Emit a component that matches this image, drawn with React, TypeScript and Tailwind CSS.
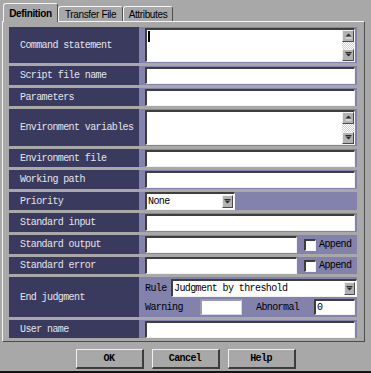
import React from "react";

const mono = "font-['Liberation_Mono',monospace] text-[10px] tracking-[-0.6px]";
const sunken =
  "bg-white border-t-2 border-l-2 border-t-[#3e3e3e] border-l-[#3e3e3e] border-b border-r border-b-[#f2f2f2] border-r-[#f2f2f2]";
const raised =
  "bg-[#b2b2b2] border-t border-l border-t-[#f0f0f0] border-l-[#f0f0f0] border-b border-r border-b-[#4a4a4a] border-r-[#4a4a4a]";

function Arrow({ up }: { up?: boolean }) {
  return (
    <svg width="7" height="6" viewBox="0 0 7 6">
      {up ? (
        <>
          <polygon points="0.5,3.5 3.5,0.5 6.5,3.5" fill="#2c2c2c" />
          <rect x="0.5" y="4.5" width="6" height="1" fill="#f4f4f4" />
        </>
      ) : (
        <>
          <polygon points="0.5,1.5 6.5,1.5 3.5,4.5" fill="#2c2c2c" />
          <rect x="0.5" y="0" width="6" height="1" fill="#2c2c2c" />
        </>
      )}
    </svg>
  );
}

function TextArea({ h, caret }: { h: string; caret?: boolean }) {
  return (
    <div className={`${sunken} ${h} w-[210px] flex`}>
      <div className="flex-1 pl-[1px] pt-[1px]">
        {caret && <div className="w-[2px] h-[11px] bg-black" />}
      </div>
      <div className="w-[12px] flex flex-col">
        <div className={`${raised} h-[12px] flex items-center justify-center`}>
          <Arrow up />
        </div>
        <div className="flex-1 bg-[repeating-conic-gradient(#cfcfcf_0_25%,#ffffff_0_50%)] bg-[length:2px_2px]" />
        <div className={`${raised} h-[12px] flex items-center justify-center`}>
          <Arrow />
        </div>
      </div>
    </div>
  );
}

function Select({ w, h, text }: { w: string; h: string; text: string }) {
  return (
    <div className={`${sunken} ${w} ${h} flex items-center`}>
      <span className={`${mono} flex-1 pl-[1px] text-black`}>{text}</span>
      <div className={`${raised} w-[11px] h-[13px] mr-[1px] flex items-center justify-center`}>
        <Arrow />
      </div>
    </div>
  );
}

function Row({ label, h, children }: { label: string; h: string; children: React.ReactNode }) {
  return (
    <div className={`flex ${h}`}>
      <div className={`w-[130px] bg-[#3a3a5e] flex items-center pl-[11px] text-[#e4e4ec] ${mono}`}>
        {label}
      </div>
      <div className="w-[218px] bg-[#8282ac] pl-[6px] flex items-center">{children}</div>
    </div>
  );
}

function Field({ w = "w-[210px]", h = "h-[17px]", value }: { w?: string; h?: string; value?: string }) {
  return (
    <div className={`${sunken} ${w} ${h} flex items-center`}>
      {value && <span className={`${mono} pl-[1px] text-black`}>{value}</span>}
    </div>
  );
}

function WithAppend() {
  return (
    <div className="flex items-center">
      <Field w="w-[152px]" />
      <div className={`${sunken} ml-[7px] w-[12px] h-[12px]`} />
      <span className={`${mono} ml-[3px] text-black`}>Append</span>
    </div>
  );
}

export default function App() {
  return (
    <div className="w-[371px] h-[373px] bg-[#a8a8a8] border-b-2 border-b-[#141414] flex flex-col overflow-hidden">
      {/* tabs */}
      <div className="h-[21px] flex items-end pl-[3px] font-['Liberation_Sans',Arial,sans-serif] text-[10px] tracking-[-0.35px] text-black">
        <div className="relative z-10 -mb-px h-[19px] w-[55px] bg-[#a8a8a8] border-l border-t border-l-[#f4f4f4] border-t-[#f4f4f4] border-r border-r-[#505050] rounded-t-[3px] flex items-center justify-center font-bold">
          Definition
        </div>
        <div className="h-[15px] w-[65px] border-l border-t border-l-[#f4f4f4] border-t-[#f4f4f4] border-r border-r-[#505050] rounded-t-[3px] flex items-center justify-center">
          Transfer File
        </div>
        <div className="h-[15px] w-[50px] border-l border-t border-l-[#f4f4f4] border-t-[#f4f4f4] border-r border-r-[#505050] rounded-t-[3px] flex items-center justify-center">
          Attributes
        </div>
      </div>

      {/* panel */}
      <div className="ml-[2px] w-[363px] h-[321px] border border-t-[#f4f4f4] border-l-[#f4f4f4] border-r-[#4c4c4c] border-b-[#4c4c4c] pt-[5px] pl-[6px] pr-[7px] flex flex-col gap-[3px]">
        <Row label="Command statement" h="h-[36px]">
          <TextArea h="h-[34px]" caret />
        </Row>
        <Row label="Script file name" h="h-[19px]">
          <Field />
        </Row>
        <Row label="Parameters" h="h-[18px]">
          <Field />
        </Row>
        <Row label="Environment variables" h="h-[37px]">
          <TextArea h="h-[35px]" />
        </Row>
        <Row label="Environment file" h="h-[18px]">
          <Field />
        </Row>
        <Row label="Working path" h="h-[19px]">
          <Field />
        </Row>
        <Row label="Priority" h="h-[18px]">
          <Select w="w-[90px]" h="h-[18px]" text="None" />
        </Row>
        <Row label="Standard input" h="h-[19px]">
          <Field />
        </Row>
        <Row label="Standard output" h="h-[19px]">
          <WithAppend />
        </Row>
        <Row label="Standard error" h="h-[17px]">
          <WithAppend />
        </Row>
        <div className="flex h-[40px]">
          <div className={`w-[130px] bg-[#3a3a5e] flex items-center pl-[11px] text-[#e4e4ec] ${mono}`}>
            End judgment
          </div>
          <div className={`w-[218px] bg-[#8282ac] pl-[6px] pt-[2px] flex flex-col gap-[2px] text-black ${mono}`}>
            <div className="flex items-center h-[18px]">
              <span className="w-[26px]">Rule</span>
              <Select w="w-[186px]" h="h-[18px]" text="Judgment by threshold" />
            </div>
            <div className="flex items-center h-[16px]">
              <span className="w-[55px]">Warning</span>
              <div className="w-[42px] h-[16px] bg-white border border-[#d6d6e4] border-l-2 border-t-2 border-l-[#9a9ab0] border-t-[#9a9ab0]" />
              <span className="ml-[14px] w-[58px]">Abnormal</span>
              <Field w="w-[41px]" h="h-[16px]" value="0" />
            </div>
          </div>
        </div>
        <Row label="User name" h="h-[18px]">
          <Field />
        </Row>
      </div>

      {/* buttons */}
      <div className={`mt-[7px] flex justify-center gap-[8px] font-bold text-black ${mono}`}>
        {["OK", "Cancel", "Help"].map((b) => (
          <div
            key={b}
            className="w-[68px] h-[20px] flex items-center justify-center border-t border-l border-t-[#f0f0f0] border-l-[#f0f0f0] border-b-2 border-r-2 border-b-[#3c3c3c] border-r-[#3c3c3c]"
          >
            {b}
          </div>
        ))}
      </div>
    </div>
  );
}
